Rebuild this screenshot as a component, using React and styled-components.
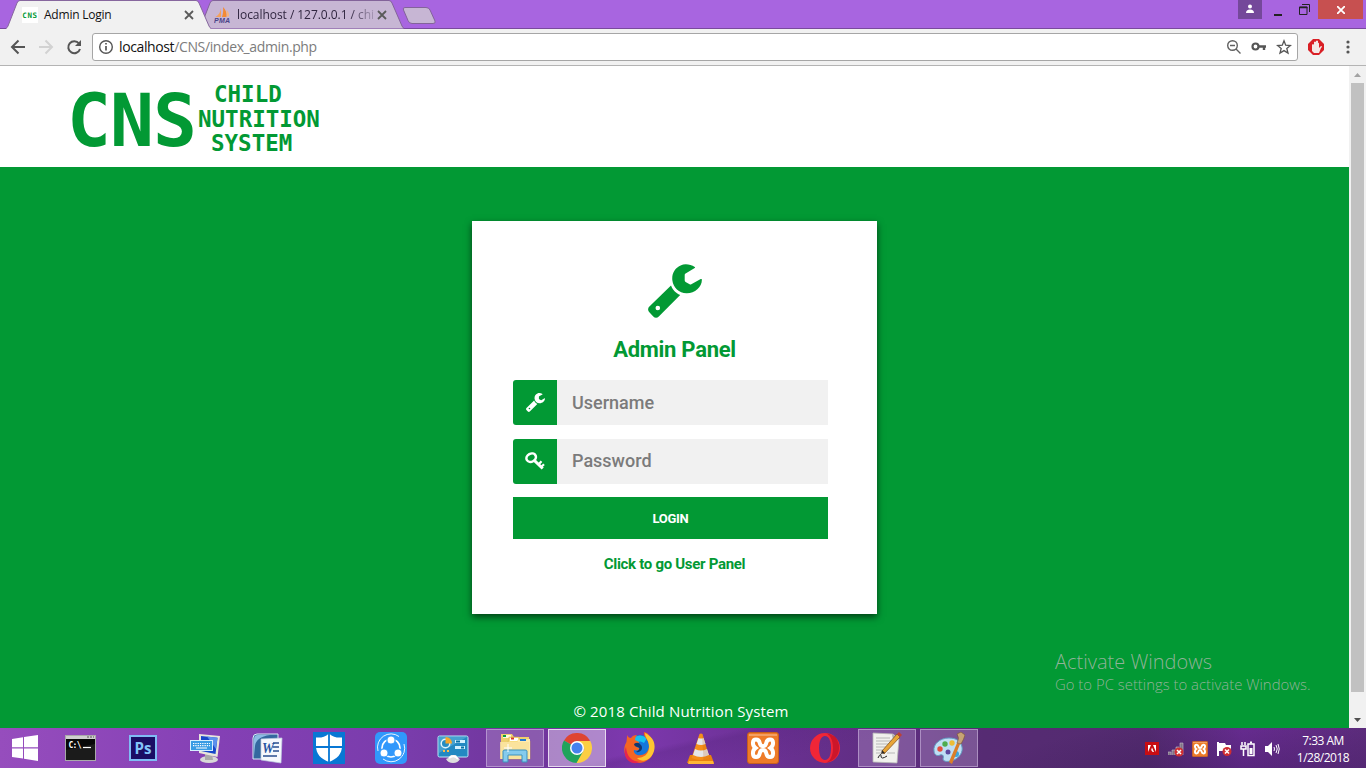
import React from "react";
import styled, { createGlobalStyle } from "styled-components";

const green = "#029934";
const ui = '"Open Sans", "Noto Sans", sans-serif';

const GlobalStyle = createGlobalStyle`
  * { box-sizing: border-box; }
  body { margin: 0; background: ${green}; overflow: hidden; }
  svg { display: block; flex: none; }
`;

const Screen = styled.div`
  width: 1366px;
  height: 768px;
  display: flex;
  flex-direction: column;
  font-family: ${ui};
  overflow: hidden;
`;

/* Browser chrome */
const TabStrip = styled.header`
  height: 29px;
  flex: none;
  display: flex;
  background: #a865e0;
  border-bottom: 1px solid #794a9d;
`;
const Tabs = styled.nav`
  display: flex;
  padding-left: 6px;
  flex: 1;
`;
const Tab = styled.div`
  width: 206px;
  height: 29px;
  margin-left: ${(p) => p.$overlap || 0}px;
  position: relative;
  z-index: ${(p) => (p.$active ? 2 : 1)};
`;
const TabShape = styled.svg`
  position: absolute;
  inset: 0;
`;
const TabContent = styled.div`
  position: relative;
  height: 29px;
  display: flex;
  align-items: center;
  padding: 1px 18px 0 ${(p) => p.$left}px;
`;
const Favicon = styled.span`
  width: 16px;
  height: 16px;
  background: #fff;
  color: ${green};
  font: bold 7.5px/17px "DejaVu Sans Mono", monospace;
  letter-spacing: 0.7px;
  text-align: center;
`;
const TabTitle = styled.span`
  margin-left: 6px;
  flex: 1;
  font-size: 12px;
  letter-spacing: ${(p) => p.$spacing}px;
  line-height: 18px;
  white-space: nowrap;
  color: #111;
  ${(p) => p.$fade && "color: #302640; mask-image: linear-gradient(90deg, #000 80%, rgba(0,0,0,.25) 96%);"}
`;
const NewTab = styled.svg`
  margin: 7px 0 0 -3px;
`;
const WindowControls = styled.div`
  display: flex;
  align-items: flex-start;
  padding-right: 3px;
`;
const WindowButton = styled.button`
  border: 0;
  padding: 0;
  width: ${(p) => p.$width}px;
  height: 19px;
  background: ${(p) => p.$bg || "transparent"};
  display: flex;
  justify-content: center;
  align-items: center;
`;
const Toolbar = styled.div`
  height: 37px;
  flex: none;
  background: #f1f1f1;
  border-bottom: 1px solid #b4b4b4;
  display: flex;
  align-items: center;
  padding: 0 10px 1px 10px;
`;
const NavButtons = styled.div`
  display: flex;
  gap: 12px;
  width: 82px;
`;
const Omnibox = styled.div`
  width: 1206px;
  height: 28px;
  background: #fff;
  border: 1px solid #a6a6a6;
  border-radius: 3px;
  display: flex;
  align-items: center;
  padding: 0 5px;
`;
const Address = styled.div`
  flex: 1;
  margin-left: 5px;
  font-size: 14px;
  letter-spacing: -0.38px;
  line-height: 20px;
  color: #7c7c7c;
  b { font-weight: 400; color: #111; }
`;
const OmniActions = styled.div`
  display: flex;
  gap: 9px;
`;
const Extensions = styled.div`
  flex: 1;
  display: flex;
  justify-content: space-between;
  padding: 0 0 0 10px;
`;

/* Page */
const Viewport = styled.div`
  height: 662px;
  flex: none;
  display: flex;
`;
const Page = styled.main`
  width: 1349px;
  background: ${green};
  display: flex;
  flex-direction: column;
  align-items: center;
  position: relative;
`;
const Scrollbar = styled.aside`
  width: 17px;
  background: #f1f1f1;
  display: flex;
  flex-direction: column;
  align-items: center;
`;
const ScrollArrow = styled.div`
  height: 17px;
  width: 17px;
  display: grid;
  place-items: center;
`;
const ScrollThumb = styled.div`
  width: 13px;
  height: 609px;
  margin-bottom: 19px;
  background: #c1c1c1;
`;
const SiteHeader = styled.div`
  width: 100%;
  height: 101px;
  background: #fff;
  display: flex;
  padding: 16px 0 0 67px;
  color: ${green};
  font-family: "DejaVu Sans Mono", monospace;
  font-weight: 700;
`;
const LogoMark = styled.div`
  width: 131px;
  padding-top: 1px;
  font-size: 73px;
  line-height: 76px;
  letter-spacing: -1px;
`;
const LogoWords = styled.div`
  display: flex;
  flex-direction: column;
  font-size: 22.5px;
  line-height: 24.6px;
`;
const LogoLine = styled.span`
  padding-left: ${(p) => p.$indent}px;
`;
const Card = styled.form`
  width: 405px;
  height: 393px;
  margin-top: 54px;
  padding: 43px 49px 0 41px;
  background: #fff;
  box-shadow: 0 3px 7px rgba(0, 0, 0, 0.6);
  display: flex;
  flex-direction: column;
  align-items: center;
  font-family: Roboto, sans-serif;
`;
const CardHead = styled.div`
  display: flex;
  flex-direction: column;
  align-items: center;
  padding-left: 8px;
`;
const Title = styled.h1`
  margin: 17px 0 16px;
  font-size: 22px;
  line-height: 29px;
  letter-spacing: -0.27px;
  font-weight: 700;
  color: ${green};
`;
const Field = styled.label`
  width: 315px;
  height: 45px;
  margin-bottom: ${(p) => p.$gap}px;
  display: flex;
`;
const FieldIcon = styled.span`
  width: 44px;
  background: ${green};
  border-radius: 3px 0 0 3px;
  display: grid;
  place-items: center;
`;
const Input = styled.input`
  width: 271px;
  border: 0;
  padding: 0 15px ${(p) => p.$lift || 0}px;
  background: #f1f1f1;
  font: 500 18px Roboto, sans-serif;
  &::placeholder { color: #7b7b7b; opacity: 1; }
`;
const LoginButton = styled.button`
  width: 315px;
  height: 42px;
  flex: none;
  border: 0;
  background: ${green};
  color: #fff;
  font: 700 13px Roboto, sans-serif;
  letter-spacing: -0.3px;
`;
const PanelLink = styled.a`
  margin-top: 15px;
  padding-left: 8px;
  font-size: 15px;
  line-height: 20px;
  letter-spacing: -0.3px;
  font-weight: 700;
  color: ${green};
`;
const Footer = styled.footer`
  margin-top: auto;
  padding: 0 0 6px 13px;
  color: #fff;
  font-size: 15px;
  line-height: 21px;
  letter-spacing: 0.13px;
`;
const Watermark = styled.div`
  position: absolute;
  left: 1055px;
  top: 583px;
  color: rgba(172, 184, 172, 0.85);
  white-space: nowrap;
  font-weight: 300;
`;
const WatermarkTitle = styled.div`
  font-size: 20px;
  line-height: 26px;
`;
const WatermarkText = styled.div`
  font-size: 14.9px;
  line-height: 18px;
`;

/* Taskbar */
const Taskbar = styled.footer`
  height: 40px;
  flex: none;
  display: flex;
  background:
    radial-gradient(ellipse 260px 70px at 1240px 60px, rgba(40, 15, 65, 0.35), transparent),
    linear-gradient(168deg, transparent 48%, rgba(90, 38, 130, 0.35) 50%, transparent 60%),
    linear-gradient(90deg, #964dbd 0, #8440b5 16%, #793cab 30%, #6f359b 39%, #7d38ae 46%, #68308f 58%, #562b73 72%, #532b70 84%, #692d93 91%, #5c2c7c 100%);
`;
const AppButton = styled.button`
  width: ${(p) => p.$width || 58}px;
  height: 38px;
  margin: 0 4px 0 0;
  padding: 0;
  border: 1px solid ${(p) => (p.$active ? "#e6d8ef" : p.$open ? "rgba(220,200,235,.5)" : "transparent")};
  background: ${(p) => (p.$active ? "rgba(230,215,240,.5)" : p.$open ? "rgba(190,165,210,.34)" : "transparent")};
  display: flex;
  align-items: center;
  justify-content: center;
`;
const Apps = styled.div`
  display: flex;
  padding-top: 1px;
  flex: 1;
`;
const Tray = styled.div`
  display: flex;
  align-items: center;
  gap: 8px;
  padding-top: 2px;
`;
const Clock = styled.div`
  width: 86px;
  padding: 4px 0 0 0;
  color: #fff;
  font-size: 12px;
  line-height: 17px;
  letter-spacing: -0.5px;
  text-align: center;
`;

const Wrench = ({ size, color }) => (
  <svg width={size} height={size} viewBox="0 0 54 54" fill={color}>
    <path d="M46.8 3C42.5.3 37-.6 32.6 1.400 26.800 4 23.700 9.300 24.300 16c.8 7.700 7 13.500 14.600 13.300C46.800 29.100 54 23.300 53.900 15.600c0-.7-.6-.9-1.200-.5l-9.400 5.200c-.7.4-1.100.3-1.700-.1l-4-2.300c-.6-.5-.9-.9-.9-1.600V11c0-.7.300-1.200.9-1.500L46.700 4c.5-.3.500-.7.100-1Z" />
    <path fillRule="evenodd" d="M23 21.500 1.400 42.600C-.4 44.300-.2 46.500 1.100 48l4.200 4.500c1.500 1.700 3.800 1.700 5.500.1L32.200 31c-4.700-2-7.200-4.800-9.200-9.500ZM9.800 41.700a2.300 2.300 0 1 1 0 4.600 2.300 2.300 0 0 1 0-4.600Z" />
  </svg>
);
const FieldKey = () => (
  <svg width="20" height="19" viewBox="0 0 20 19" fill="none" stroke="#fff">
    <ellipse cx="6.2" cy="5.8" rx="4.9" ry="4" strokeWidth="2.500" transform="rotate(-28 6 5.800)" />
    <path d="m9 8.200 8.700 8.300" strokeWidth="3" />
    <path d="m14 12 2.500-2.800m.2 5.300 2.300-2.300" strokeWidth="2.200" />
  </svg>
);
const CloseX = () => (
  <svg width="10" height="10" viewBox="0 0 10 10"><path d="m1 1 8 8m0-8L1 9" stroke="#5a5a5a" strokeWidth="1.800" /></svg>
);
const PmaIcon = () => (
  <svg width="17" height="16" viewBox="0 0 17 16">
    <path d="M7 1v9H1.500C5 8 6.500 5 7 1Z" fill="#f4a15c" />
    <path d="M9 0c3 3 4 6 3.500 10H8C9 7 9.500 4 9 0Z" fill="#f38a34" />
    <path d="M12.500 3c2 2 3 4 2.500 6.500h-2Z" fill="#f6b57f" />
    <text x="0" y="15.500" fontFamily="Liberation Sans, sans-serif" fontSize="7" fontWeight="700" fontStyle="italic" fill="#4a4489" textLength="16">PMA</text>
  </svg>
);
const XamppIcon = ({ size }) => (
  <svg width={size} height={size} viewBox="0 0 32 32">
    <rect x=".5" y=".5" width="31" height="31" rx="2.500" fill="#ee7b28" stroke="#c65f1d" />
    <path d="M2 2h28v2H2Z" fill="#f5b17c" opacity=".7" />
    <path d="M8.500 16C5 13.500 5 7.500 9 7.500 15 7.500 10.500 14.200 16 14.200 21.500 14.200 17 7.500 23 7.500 27 7.500 27 13.500 23.500 16 27 18.500 27 25 23 25 17 25 21.500 18 16 18 10.500 18 15 25 9 25 5 25 5 18.500 8.500 16Z" fill="none" stroke="#fff" strokeWidth="4" />
  </svg>
);

const StartIcon = () => (
  <svg width="28" height="26" viewBox="0 0 28 26" fill="#fff"><path d="M1 4 12 2.300v10H1ZM13 2.100 27 0v12.300H13ZM1 13.500h11v10L1 22ZM13 13.500h14V26l-14-2.200Z" /></svg>
);
const CmdIcon = () => (
  <svg width="31" height="26" viewBox="0 0 31 26">
    <rect x=".5" y=".5" width="30" height="25" fill="#080808" stroke="#a9a9a9" />
    <path d="M1 1h29v3H1Z" fill="#cfcfcf" /><path d="M22 2h7" stroke="#555" strokeDasharray="2 1" />
    <path d="m1 15 29-6v16H1Z" fill="#242424" opacity=".7" />
    <text x="3.500" y="12.500" fontFamily="DejaVu Sans Mono, monospace" fontSize="8" fontWeight="700" fill="#fff" textLength="13">C:\</text>
    <path d="M18 12.500h8" stroke="#fff" strokeWidth="1.200" />
  </svg>
);
const PsIcon = () => (
  <svg width="28" height="26" viewBox="0 0 28 26">
    <rect x="1" y="1" width="26" height="24" fill="#1b0d64" stroke="#7fbcf5" strokeWidth="2" />
    <text x="14" y="18.500" textAnchor="middle" fontFamily="Open Sans, sans-serif" fontWeight="700" fontSize="15.500" fill="#83c4fa" textLength="17" lengthAdjust="spacingAndGlyphs">Ps</text>
  </svg>
);
const KeyboardIcon = () => (
  <svg width="31" height="31" viewBox="0 0 31 31">
    <ellipse cx="19" cy="26.500" rx="9" ry="3.600" fill="#d8d8d8" /><path d="m15 20 7 1 1 6h-8Z" fill="#aaa" />
    <path d="m9 1 21 2-2.500 21L9 20Z" fill="#e8e5dc" /><path d="m11 3 16.500 1.800L25.500 21 11 18Z" fill="#1746c9" /><path d="m17 3.600 10.500 1.200L26 16Z" fill="#5d91ed" />
    <rect x=".5" y="7.500" width="22" height="10" fill="#389be4" stroke="#d6efff" />
    <path d="M3 10.500h17M3 12.700h17" stroke="#fff" strokeWidth="1.200" strokeDasharray="1.300 1" /><path d="M6 15h11" stroke="#fff" />
  </svg>
);
const WordIcon = () => (
  <svg width="31" height="31" viewBox="0 0 31 31">
    <path d="M5 1h21v25H1V5Q1 1 5 1Z" fill="#34689f" stroke="#dcecf8" />
    <path d="M3 13Q4 4 18 2H6Q2 2 2 6v17Z" fill="#8dbce4" />
    <path d="m9 6 21-1-1 25-20-3Z" fill="#f5f8fd" stroke="#bdcbdf" strokeWidth=".7" />
    <text x="10" y="20" fontFamily="Liberation Serif, serif" fontSize="15" fontWeight="700" fontStyle="italic" fill="#2855a1" textLength="12" lengthAdjust="spacingAndGlyphs">W</text>
    <path d="M21 10h6m-6.500 4h6.500m-6 4h6M11 23h14" stroke="#294d8e" strokeWidth="1.700" />
  </svg>
);
const DefenderIcon = () => (
  <svg width="32" height="32" viewBox="0 0 32 32">
    <path d="M0 0h32v32H0Z" fill="#0877d4" />
    <path d="M16 1.500C12 5 8 6 3 5.500V14c0 8 5 13 13 16 8-3 13-8 13-16V5.500C24 6 20 5 16 1.500Z" fill="#fff" />
    <path d="M16 1v30M2 15h28" stroke="#0877d4" strokeWidth="1.800" />
  </svg>
);
const ShareIcon = () => (
  <svg width="32" height="32" viewBox="0 0 32 32" fill="none" stroke="#fff">
    <rect width="32" height="32" rx="5" fill="#3198fb" stroke="none" />
    <path d="M3 19A13.500 13.500 0 0 1 24 4.500M29 12a13.500 13.500 0 0 1-21 15" strokeWidth=".9" />
    <circle cx="16" cy="16" r="9" strokeWidth="1.700" />
    <g fill="#fff" stroke="#3198fb" strokeWidth="1.200"><circle cx="16" cy="8" r="4.100" /><circle cx="9" cy="21" r="4.100" /><circle cx="23" cy="21" r="4.100" /></g>
  </svg>
);
const ControlIcon = () => (
  <svg width="32" height="30" viewBox="0 0 32 30">
    <rect x="1" y="3" width="30" height="21" rx="1.500" fill="#2389c2" stroke="#bde9f7" />
    <path d="M2 4h28L2 20Z" fill="#64b5dc" opacity=".55" /><circle cx="8.500" cy="10.500" r="4.300" fill="#268dc3" stroke="#e1f5fc" strokeWidth="1.500" />
    <path d="M8.500 10.500V4q6 0 6.500 6.500Z" fill="#f7a72b" />
    <path d="M18 8.500h10m-10 6h10" stroke="#d3f1ff" strokeWidth="3" /><path d="M19 8.500h4m1 6h3" stroke="#0871a5" strokeWidth="1.800" />
    <path d="M6 18h2m2 0h2" stroke="#ffbc49" strokeWidth="2" />
    <path d="M14 22h5q1 3 4 4-2 4-7 4t-7-4q3-1 5-4Z" fill="#dedede" /><path d="M12 25q5-4 9 1" stroke="#fff" strokeWidth="2" fill="none" />
  </svg>
);
const ExplorerIcon = () => (
  <svg width="32" height="30" viewBox="0 0 32 30">
    <path d="M2 4V1h11l2 3h15v22H2Z" fill="#eed06d" /><path d="M4 2h8v3H4Z" fill="#fff8dd" /><path d="M4 3h3" stroke="#079d3e" strokeWidth="2" />
    <path d="M10 4h10l1 4h10v18H6Z" fill="#f7dd82" stroke="#d2ae47" strokeWidth=".5" /><path d="M11 5h8v3h-8Z" fill="#fff" /><path d="M12 5.500h3" stroke="#d73a25" strokeWidth="2" />
    <path d="m18 7 13-1v20H2V9h17Z" fill="#ffebad" /><path d="M21 7h6" stroke="#2479d0" strokeWidth="2" />
    <path d="M1 9h29v17H1Z" fill="#f9e29a" opacity=".85" />
    <path d="M4 29V18q0-1 2-1h20q2 0 2 1v11h-5v-7H9v7Z" fill="#85cbed" stroke="#3d91bd" /><path d="M9 11v8m-4-4h8" stroke="#fff" />
  </svg>
);
const ChromeIcon = () => (
  <svg width="30" height="30" viewBox="0 0 30 30">
    <path d="M15 15 2 7.500A15 15 0 0 1 28 7.500Z" fill="#df4532" /><path d="M15 15 2 7.500A15 15 0 0 0 15 30l7-12Z" fill="#20a35c" /><path d="M15 8h13.300A15 15 0 0 1 14.500 30l8-14Z" fill="#fbce43" />
    <circle cx="15" cy="15" r="7" fill="#fff" /><circle cx="15" cy="15" r="5.500" fill="#4682ed" />
  </svg>
);
const FirefoxIcon = () => (
  <svg width="32" height="32" viewBox="0 0 32 32">
    <circle cx="17" cy="15" r="12" fill="#1677da" /><path d="M10 6q7-5 14 0l-3 5q-5-4-9 2Z" fill="#18c1f0" />
    <path d="M4 5q0 5-2 8C-1 23 6 31 15 31c9 0 16-6 16-16 0-5-2-9-7-14l-3-1c-1 6 5 7 5 14 0 5-4 9-8 9-4 1-8-2-7-5 3 1 5 0 6-2-3 0-5-2-5-4 2 0 4 0 4-2l-4-2c0-2 1-4 2-5-3 0-5 1-6 3-2 0-3-1-4-3Z" fill="#f46523" />
    <path d="M22 1c0 5 4 7 4 14 0 7-5 11-12 11 5 5 14 3 17-7 2-8-1-14-9-18Z" fill="#ffc632" /><path d="M3 15q1 14 14 15C9 34-2 27 3 15Z" fill="#e5244f" />
    <path d="M11 12q4-3 7 1c3 4-1 8-5 7 4-2 4-4 2-5-2 0-4-1-4-3Z" fill="#12376f" />
  </svg>
);
const VlcIcon = () => (
  <svg width="28" height="31" viewBox="0 0 28 31">
    <path d="m3 22-3 8h27l-3-8Z" fill="#e9820e" /><path d="m2 28-1 3h26l-1-3Z" fill="#ffb635" />
    <path d="M12.500 1q1.500-1 3 0l7 24q-9 4-18 0Z" fill="#f58f19" /><path d="m11.500 5-2 6q4.500 2 9 0l-2-6q-2.500 1-5 0ZM8 16l-2 6q8 4 16 0l-2-6q-6 3-12 0Z" fill="#e5e7e8" />
    <path d="m15 1 7.500 24-6 2Z" fill="#bd590c" opacity=".2" />
  </svg>
);
const OperaIcon = () => (
  <svg width="30" height="30" viewBox="0 0 30 30"><path fillRule="evenodd" d="M15 0a15 15 0 1 0 0 30 15 15 0 0 0 0-30Zm0 3c4 0 6 5 6 12s-2 12-6 12-6-5-6-12S11 3 15 3Z" fill="#f02637" /><path d="M15 0q12 1 14 12 1 15-14 18c5-1 8-7 8-15S20 1 15 0Z" fill="#b80e24" opacity=".65" /></svg>
);
const NotesIcon = () => (
  <svg width="32" height="32" viewBox="0 0 32 32">
    <path d="m2 1 20 1 6 5-2 24L2 30Z" fill="#f1f1ed" stroke="#b5b5b5" strokeWidth=".8" /><path d="m21 2 1 6 6-1Z" fill="#aaa" />
    <path d="M5 6h14M5 9h18M5 12h13M5 15h10M5 18h9M5 21h5m6 0h8" stroke="#aaa" strokeWidth=".8" />
    <path d="m11 19 2 3L29 5l-3-3Z" fill="#e9a637" stroke="#865624" strokeWidth=".8" /><path d="m10 22 1-4 3 3Z" fill="#2c2925" /><path d="m26 2 2-2 3 3-2 2Z" fill="#bc4036" />
    <path d="M7 26q3-6 3-2 0 4 6 0" fill="none" stroke="#222" />
  </svg>
);
const PaintIcon = () => (
  <svg width="32" height="32" viewBox="0 0 32 32">
    <path d="M16 6C7 6 0 12 1 19c.5 5 4 5 6 4 3-1 4 1 3 4 0 3 6 3 11 1 6-3 9-8 8-13-1-6-6-9-13-9Z" fill="#bfdef4" stroke="#639fc4" />
    <circle cx="7" cy="17" r="2.700" fill="#e64c3d" /><circle cx="12" cy="12" r="2.700" fill="#4fac50" /><circle cx="19" cy="11" r="2.700" fill="#edbd37" /><circle cx="15" cy="20" r="2.500" fill="#5d489e" /><circle cx="23" cy="22" r="3" fill="#3ba5dd" />
    <path d="m16 30 8-19 3 1-8 20Z" fill="#db7e29" /><path d="M24 11q3-5 0-9l4-2 4 3q-1 4-4 9Z" fill="#c7a374" stroke="#795230" strokeWidth=".6" />
  </svg>
);
const ErrorDot = ({ x, y }) => (
  <g><circle cx={x} cy={y} r="4.500" fill="#d02e31" /><path d={`M${x - 2} ${y - 2}l4 4m0-4l-4 4`} stroke="#fff" strokeWidth="1.500" /></g>
);

const tabOutline = "M0 28.500Q1 28 2 26L11 3Q12 .5 14 .5H190Q192 .5 193 3L203 26Q204 28 205 28.500";

export default function App() {
  return (
    <>
      <GlobalStyle />
      <Screen>
        <TabStrip>
          <Tabs>
            <Tab $active>
              <TabShape width="206" height="29" viewBox="0 0 206 29">
                <path d={tabOutline + "V29H0Z"} fill="#f1f1f1" />
                <path d={tabOutline} fill="none" stroke="#87679e" />
              </TabShape>
              <TabContent $left={16}><Favicon>CNS</Favicon><TabTitle $spacing={-0.22}>Admin Login</TabTitle><CloseX /></TabContent>
            </Tab>
            <Tab $overlap={-13}>
              <TabShape width="206" height="29" viewBox="0 0 206 29">
                <path d={tabOutline} fill="#c7b6d4" stroke="#83639a" />
              </TabShape>
              <TabContent $left={15}><PmaIcon /><TabTitle $spacing={-0.05} $fade>localhost / 127.0.0.1 / chi</TabTitle><CloseX /></TabContent>
            </Tab>
            <NewTab width="34" height="18" viewBox="0 0 34 18"><path d="M3 .5H24Q27 .5 28 3l5 11q1 2.500-2 2.500H10q-3 0-4-3L1.500 3Q.5.5 3 .5Z" fill="#c7b6d4" stroke="#83639a" /></NewTab>
          </Tabs>
          <WindowControls>
            <WindowButton $width={24} $bg="#74489a"><svg width="10" height="12" viewBox="0 0 10 12" fill="#fff"><circle cx="5" cy="2.500" r="2" /><path d="M1 9q0-3.500 4-3.500T9 9Z" /></svg></WindowButton>
            <WindowButton $width={31}><svg width="10" height="14"><path d="M1 12h8" stroke="#222" strokeWidth="2" /></svg></WindowButton>
            <WindowButton $width={22}><svg width="11" height="11" viewBox="0 0 11 11" fill="none" stroke="#222"><path d="M3 .5h7.500v7.500M.5 3h7.500v7.500H.5Z" /><path d="M.5 3.500h8" strokeWidth="1.500" /></svg></WindowButton>
            <WindowButton $width={3} />
            <WindowButton $width={45} $bg="#c75050"><svg width="8" height="8"><path d="m0 0 8 8m0-8L0 8" stroke="#fff" strokeWidth="1.800" /></svg></WindowButton>
          </WindowControls>
        </TabStrip>

        <Toolbar>
          <NavButtons>
            <svg width="16" height="16" viewBox="0 0 16 16" fill="none" stroke="#555" strokeWidth="2"><path d="M15 8H2m6.500-6.500L2 8l6.500 6.500" /></svg>
            <svg width="16" height="16" viewBox="0 0 16 16" fill="none" stroke="#d2d2d2" strokeWidth="2"><path d="M1 8h13M7.500 1.500 14 8l-6.500 6.500" /></svg>
            <svg width="16" height="16" viewBox="0 0 16 16"><path d="M13 4.500A6 6 0 1 0 14 10" fill="none" stroke="#555" strokeWidth="2" /><path d="M15 1v6H9Z" fill="#555" /></svg>
          </NavButtons>
          <Omnibox>
            <svg width="16" height="16" viewBox="0 0 16 16" fill="none" stroke="#555"><circle cx="8" cy="8" r="6.300" strokeWidth="1.400" /><path d="M8 7v4.500M8 4v1.600" strokeWidth="1.700" /></svg>
            <Address><b>localhost</b>/CNS/index_admin.php</Address>
            <OmniActions>
              <svg width="16" height="16" viewBox="0 0 16 16" fill="none" stroke="#606060" strokeWidth="1.400"><circle cx="6.500" cy="6.500" r="4.800" /><path d="m10 10 4.500 4.500M4 6.500h5" /></svg>
              <svg width="16" height="16" viewBox="0 0 16 16" fill="none" stroke="#555"><circle cx="4.500" cy="7.500" r="3" strokeWidth="2.200" /><path d="M7 7.500h8M13 8v3" strokeWidth="2.400" /></svg>
              <svg width="16" height="16" viewBox="0 0 16 16"><path d="m8 1.800 1.700 4.400 4.700.3-3.600 3 1.200 4.600L8 11.600l-4 2.500 1.200-4.600-3.600-3 4.700-.3Z" fill="none" stroke="#555" strokeWidth="1.300" /></svg>
            </OmniActions>
          </Omnibox>
          <Extensions>
            <svg width="16" height="16" viewBox="0 0 16 16"><path d="M5 0h6l5 5v6l-5 5H5l-5-5V5Z" fill="#d91f25" /><path d="M4 12V6q1-2 2 0V3q1-1 2 0V2q1-1 2 0v2q1-1 1 1v4l2-2q2 0 0 2l-2 5H6Z" fill="#f4e8e6" /></svg>
            <svg width="16" height="16" viewBox="0 0 16 16" fill="#555"><circle cx="8" cy="3" r="1.600" /><circle cx="8" cy="8" r="1.600" /><circle cx="8" cy="13" r="1.600" /></svg>
          </Extensions>
        </Toolbar>

        <Viewport>
          <Page>
            <SiteHeader>
              <LogoMark>CNS</LogoMark>
              <LogoWords><LogoLine $indent={16}>CHILD</LogoLine><LogoLine $indent={0}>NUTRITION</LogoLine><LogoLine $indent={13}>SYSTEM</LogoLine></LogoWords>
            </SiteHeader>
            <Card>
              <CardHead><Wrench size={54} color={green} /><Title>Admin Panel</Title></CardHead>
              <Field $gap={14}><FieldIcon><Wrench size={19} color="#fff" /></FieldIcon><Input placeholder="Username" /></Field>
              <Field $gap={13}><FieldIcon><FieldKey /></FieldIcon><Input type="password" placeholder="Password" $lift={2} /></Field>
              <LoginButton type="button">LOGIN</LoginButton>
              <PanelLink>Click to go User Panel</PanelLink>
            </Card>
            <Footer>© 2018 Child Nutrition System</Footer>
            <Watermark><WatermarkTitle>Activate Windows</WatermarkTitle><WatermarkText>Go to PC settings to activate Windows.</WatermarkText></Watermark>
          </Page>
          <Scrollbar>
            <ScrollArrow><svg width="7" height="4"><path d="M0 4 3.500 0 7 4Z" fill="#a3a3a3" /></svg></ScrollArrow>
            <ScrollThumb />
            <ScrollArrow><svg width="7" height="4"><path d="M0 0h7L3.500 4Z" fill="#505050" /></svg></ScrollArrow>
          </Scrollbar>
        </Viewport>

        <Taskbar>
          <Apps>
            <AppButton $width={49}><StartIcon /></AppButton>
            <AppButton $width={55}><CmdIcon /></AppButton>
            <AppButton $width={61}><PsIcon /></AppButton>
            <AppButton $width={57}><KeyboardIcon /></AppButton>
            <AppButton><WordIcon /></AppButton>
            <AppButton><DefenderIcon /></AppButton>
            <AppButton><ShareIcon /></AppButton>
            <AppButton><ControlIcon /></AppButton>
            <AppButton $open><ExplorerIcon /></AppButton>
            <AppButton $active><ChromeIcon /></AppButton>
            <AppButton><FirefoxIcon /></AppButton>
            <AppButton><VlcIcon /></AppButton>
            <AppButton><XamppIcon size={32} /></AppButton>
            <AppButton><OperaIcon /></AppButton>
            <AppButton $open><NotesIcon /></AppButton>
            <AppButton $open><PaintIcon /></AppButton>
          </Apps>
          <Tray>
            <svg width="16" height="16" viewBox="0 0 16 16"><path d="M1 1h14v13H1Z" fill="#c80d13" /><path d="M4 4h3l-3 7ZM9 4h3v7ZM8 6.500l2 4.500H8.500L8 9.500H7Z" fill="#fff" /></svg>
            <svg width="16" height="16" viewBox="0 0 16 16"><path d="M0 14v-3h3v3m1 0V9h3v5m1 0V6h3v8m1 0V2h3v12" fill="#807486" stroke="#c7bfca" strokeWidth=".6" /><ErrorDot x={11} y={11} /></svg>
            <XamppIcon size={16} />
            <svg width="16" height="16" viewBox="0 0 16 16"><path d="M1 1h2v14H1Z" fill="#fff" /><path d="M3 2h6l1 2h5v6H3Z" fill="#fff" /><ErrorDot x={11} y={10.5} /></svg>
            <svg width="16" height="16" viewBox="0 0 16 16" fill="none" stroke="#fff"><path d="M2 1v3m3-3v3M1 5h5v3H1Zm2.500 3v7" strokeWidth="1.500" /><rect x="8" y="3" width="6" height="11.500" strokeWidth="1.500" /><path d="M10 1.500h2" strokeWidth="2" /><path d="M11 7v6" strokeWidth="3" /></svg>
            <svg width="16" height="16" viewBox="0 0 16 16" fill="none" stroke="#fff"><path d="M1 5h3l4-4v14l-4-4H1Z" fill="#fff" stroke="none" /><path d="M10 6q1 2 0 4m2-6q2.500 4 0 8m2-9q2.500 5 0 10" /></svg>
          </Tray>
          <Clock><div>7:33 AM</div><div>1/28/2018</div></Clock>
        </Taskbar>
      </Screen>
    </>
  );
}
